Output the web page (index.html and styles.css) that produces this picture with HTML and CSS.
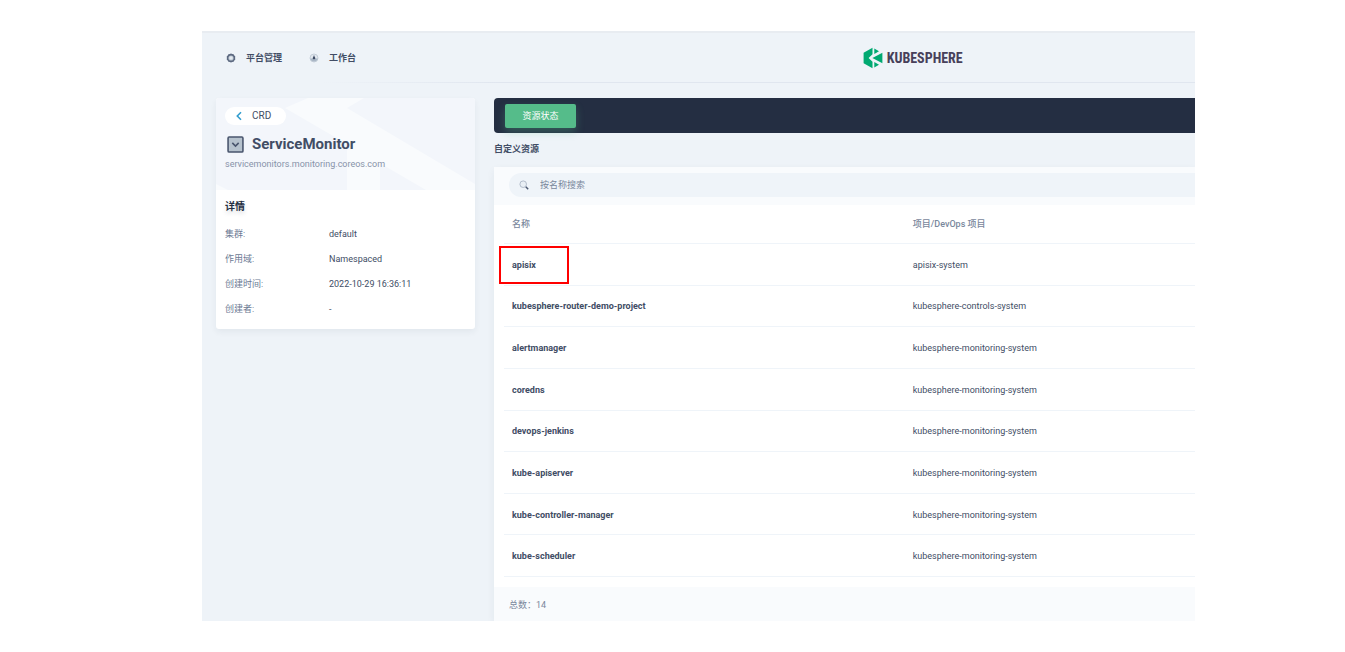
FILE: index.html
```html
<!DOCTYPE html>
<html lang="zh-CN">
<head>
<meta charset="utf-8">
<title>ServiceMonitor - KubeSphere</title>
<link rel="stylesheet" href="styles.css">
</head>
<body>
<div class="app">
  <header class="topbar">
    <nav class="topnav">
      <a class="navlink" href="#">
        <svg class="navicon" viewBox="0 0 10 10"><path d="M5 .4 6.200 1 7.600 1.200 8.300 2.500 9.300 3.500 9.100 5 9.300 6.500 8.300 7.500 7.600 8.800 6.200 9 5 9.600 3.800 9 2.400 8.800 1.700 7.500.7 6.500.9 5 .7 3.500 1.700 2.500 2.400 1.200 3.800 1Z" fill="#5c6980"/><circle cx="5" cy="5" r="2.600" fill="#b6c2cd"/><circle cx="5" cy="5" r="1.800" fill="#e4eaf1"/></svg>
        <span>平台管理</span>
      </a>
      <a class="navlink" href="#">
        <svg class="navicon" viewBox="0 0 10 10"><circle cx="5" cy="5" r="4" fill="#e3e9f0" stroke="#b9c3cf" stroke-width=".7"/><path d="M1.200 5.500h7.600A3.900 3.900 0 0 1 1.200 5.500Z" fill="#aab7c6"/><path d="M5 2 5.700 4 6.500 5.300 5 6.400 3.500 5.300 4.300 4Z" fill="#36435c"/></svg>
        <span>工作台</span>
      </a>
    </nav>
    <a class="logo" href="#">
      <svg class="logomark" viewBox="0 0 20 22"><path d="M9.500.8V7.200L5.600 11l3.900 3.800v6.400L.6 16.200V5.800Z" fill="#00a971"/><path d="M11.300 1.400 16 4.200 11.300 7ZM11.300 20.600 16 17.800 11.300 15Z" fill="#00a971"/><path d="M19.400 5.800V16.200L9.400 11Z" fill="#00a971"/></svg>
      <span class="logotext">KUBESPHERE</span>
    </a>
  </header>

  <div class="columns">
    <aside class="side">
      <div class="banner">
        <svg class="pattern" viewBox="0 0 259 92" preserveAspectRatio="none"><path d="M69 10 92 0h56L131 10l128 76v6h-49ZM131 45l33 18v29h-33ZM0 86l12 6H0Z" fill="#f9fbfd"/></svg>
        <a class="back" href="#">
          <svg class="backicon" viewBox="0 0 8 10"><path d="M6 1.300 2.300 5 6 8.700" fill="none" stroke="#329dce" stroke-width="1.600"/></svg>
          <span>CRD</span>
        </a>
        <h1 class="title">
          <svg class="titleicon" viewBox="0 0 16 16"><rect x="1" y="1" width="14" height="14" rx="1" fill="#b6c2cd" stroke="#4a566e" stroke-width="1.500"/><path d="M5 6.500 8 9.500 11 6.500" fill="none" stroke="#4a566e" stroke-width="1.500"/></svg>
          <span>ServiceMonitor</span>
        </h1>
        <p class="subtitle">servicemonitors.monitoring.coreos.com</p>
      </div>
      <section class="details">
        <h2 class="detailhead">详情</h2>
        <dl class="facts">
          <dt>集群:</dt><dd>default</dd>
          <dt>作用域:</dt><dd>Namespaced</dd>
          <dt>创建时间:</dt><dd>2022-10-29 16:36:11</dd>
          <dt>创建者:</dt><dd>-</dd>
        </dl>
      </section>
    </aside>

    <main class="main">
      <div class="tabs"><button class="tab" type="button">资源状态</button></div>
      <h2 class="sectionhead">自定义资源</h2>
      <section class="card">
        <div class="toolbar">
          <label class="search">
            <svg class="searchicon" viewBox="0 0 10 10"><circle cx="4.200" cy="4.200" r="3.300" fill="#e9eff5" stroke="#a3afbf" stroke-width=".8"/><path d="M6.800 6.800 9.200 9.200" stroke="#4b5870" stroke-width="1.500"/></svg>
            <input class="searchbox" type="text" placeholder="按名称搜索" aria-label="按名称搜索">
          </label>
        </div>
        <div class="tablewrap">
          <table class="table">
            <thead><tr><th class="namecol">名称</th><th>项目/DevOps 项目</th></tr></thead>
            <tbody>
              <tr><td class="marked"><a href="#">apisix</a></td><td>apisix-system</td></tr>
              <tr><td><a href="#">kubesphere-router-demo-project</a></td><td>kubesphere-controls-system</td></tr>
              <tr><td><a href="#">alertmanager</a></td><td>kubesphere-monitoring-system</td></tr>
              <tr><td><a href="#">coredns</a></td><td>kubesphere-monitoring-system</td></tr>
              <tr><td><a href="#">devops-jenkins</a></td><td>kubesphere-monitoring-system</td></tr>
              <tr><td><a href="#">kube-apiserver</a></td><td>kubesphere-monitoring-system</td></tr>
              <tr><td><a href="#">kube-controller-manager</a></td><td>kubesphere-monitoring-system</td></tr>
              <tr><td><a href="#">kube-scheduler</a></td><td>kubesphere-monitoring-system</td></tr>
            </tbody>
          </table>
        </div>
        <footer class="total">总数：14</footer>
      </section>
    </main>
  </div>
</div>
</body>
</html>
```
FILE: styles.css
```css
*, *::after { box-sizing: border-box; }
body {
  margin: 0;
  padding: 31px 150px 31px 202px;
  background: #fff;
  color: #414d65;
  font: 9px/16px Roboto, "Noto Sans CJK SC", sans-serif;
}
a { color: inherit; text-decoration: none; }
h1, h2, p, dl, dd { margin: 0; }
svg { display: block; flex: none; }

.app {
  background: #eef3f8;
  border-top: 2px solid #e8ecf1;
  overflow: hidden;
}

.topbar {
  display: grid;
  grid-template-columns: 2fr 1fr;
  align-items: center;
  height: 50px;
  padding-right: 2px;
  background: linear-gradient(90deg, transparent 12%, #e0e6ef 30%) bottom / 100% 1px no-repeat;
}
.topnav { display: flex; gap: 27px; padding-left: 24px; }
.navlink { display: flex; align-items: center; gap: 10px; font-weight: 700; }
.navicon { width: 10px; height: 10px; }
.logo { display: flex; align-items: center; gap: 4px; }
.logomark { width: 20px; height: 22px; }
.logotext {
  color: #47405a;
  font: 700 14px/20px "Liberation Sans Narrow", "Roboto Condensed", Roboto, sans-serif;
}

.columns { display: flex; align-items: flex-start; gap: 19px; padding: 15px 0 0 14px; }

.side {
  flex: 0 0 259px;
  background: #fff;
  border-radius: 3px;
  box-shadow: 0 3px 6px rgba(36, 46, 66, .06);
  overflow: hidden;
}
.banner {
  position: relative;
  height: 92px;
  padding: 9px;
  background: #f3f6fb;
}
.pattern { position: absolute; inset: 0; width: 100%; height: 100%; }
.back {
  position: relative;
  display: inline-flex;
  align-items: center;
  gap: 9px;
  height: 18px;
  padding: 0 15px 0 10px;
  border-radius: 9px;
  background: #fff;
  font-size: 10px;
  vertical-align: top;
}
.backicon { width: 8px; height: 10px; }
.title {
  position: relative;
  display: flex;
  align-items: center;
  gap: 8px;
  margin-top: 9px;
  padding-left: 2px;
  font-size: 15px;
  line-height: 20px;
}
.titleicon { width: 17px; height: 17px; }
.subtitle { position: relative; margin-top: 2px; color: #8793a9; }

.details { padding: 8px 9px 7px; }
.detailhead { font-size: 10px; line-height: 18px; color: #242e42; text-shadow: 0 3px 4px rgba(36, 46, 66, .15); }
.facts {
  display: grid;
  grid-template-columns: 104px 1fr;
  padding-top: 6px;
  line-height: 25px;
}
.facts dt { color: #6c7a94; }

.main { flex: 1; min-width: 0; }
.tabs {
  display: flex;
  align-items: center;
  height: 35px;
  padding-left: 11px;
  border-radius: 4px 0 0 4px;
  background: #242e42;
}
.tab {
  width: 71px;
  height: 24px;
  padding: 0;
  border: 0;
  border-radius: 2px;
  background: #55bc8a;
  color: #fff;
  font: inherit;
  box-shadow: 0 4px 8px rgba(85, 188, 138, .3);
}
.sectionhead { margin: 8px 0 10px; font-size: 9px; font-weight: 700; }

.card {
  background: #fff;
  border-radius: 3px 0 0 0;
  box-shadow: 0 3px 8px rgba(36, 46, 66, .06);
}
.toolbar { padding: 6px 0 8px 15px; background: #f9fbfd; }
.search {
  display: flex;
  align-items: center;
  gap: 11px;
  height: 24px;
  padding-left: 10px;
  border-radius: 12px 0 0 12px;
  background: #eff4f9;
}
.searchicon { width: 10px; height: 10px; }
.searchbox {
  flex: 1;
  min-width: 0;
  padding: 0;
  border: 0;
  outline: 0;
  background: none;
  color: inherit;
  font: inherit;
}
.searchbox::placeholder { color: #79879c; opacity: 1; }

.tablewrap { padding: 0 0 10px 10px; }
.table { width: 100%; height: 372px; border-collapse: separate; border-spacing: 0; table-layout: fixed; }
.table th, .table td { padding: 1px 8px 0; border-bottom: 1px solid #eff4f9; text-align: left; }
.table th { height: 39px; padding-top: 0; color: #79879c; font-weight: 500; }
.namecol { width: 58%; }
.table td a { font-weight: 700; }
.marked { position: relative; }
.marked::after {
  content: "";
  position: absolute;
  top: 2px;
  left: -5px;
  width: 70px;
  height: 38px;
  border: 2px solid #f00;
}
.total { padding: 10px 15px 8px; background: #f9fbfd; color: #79879c; }
```
